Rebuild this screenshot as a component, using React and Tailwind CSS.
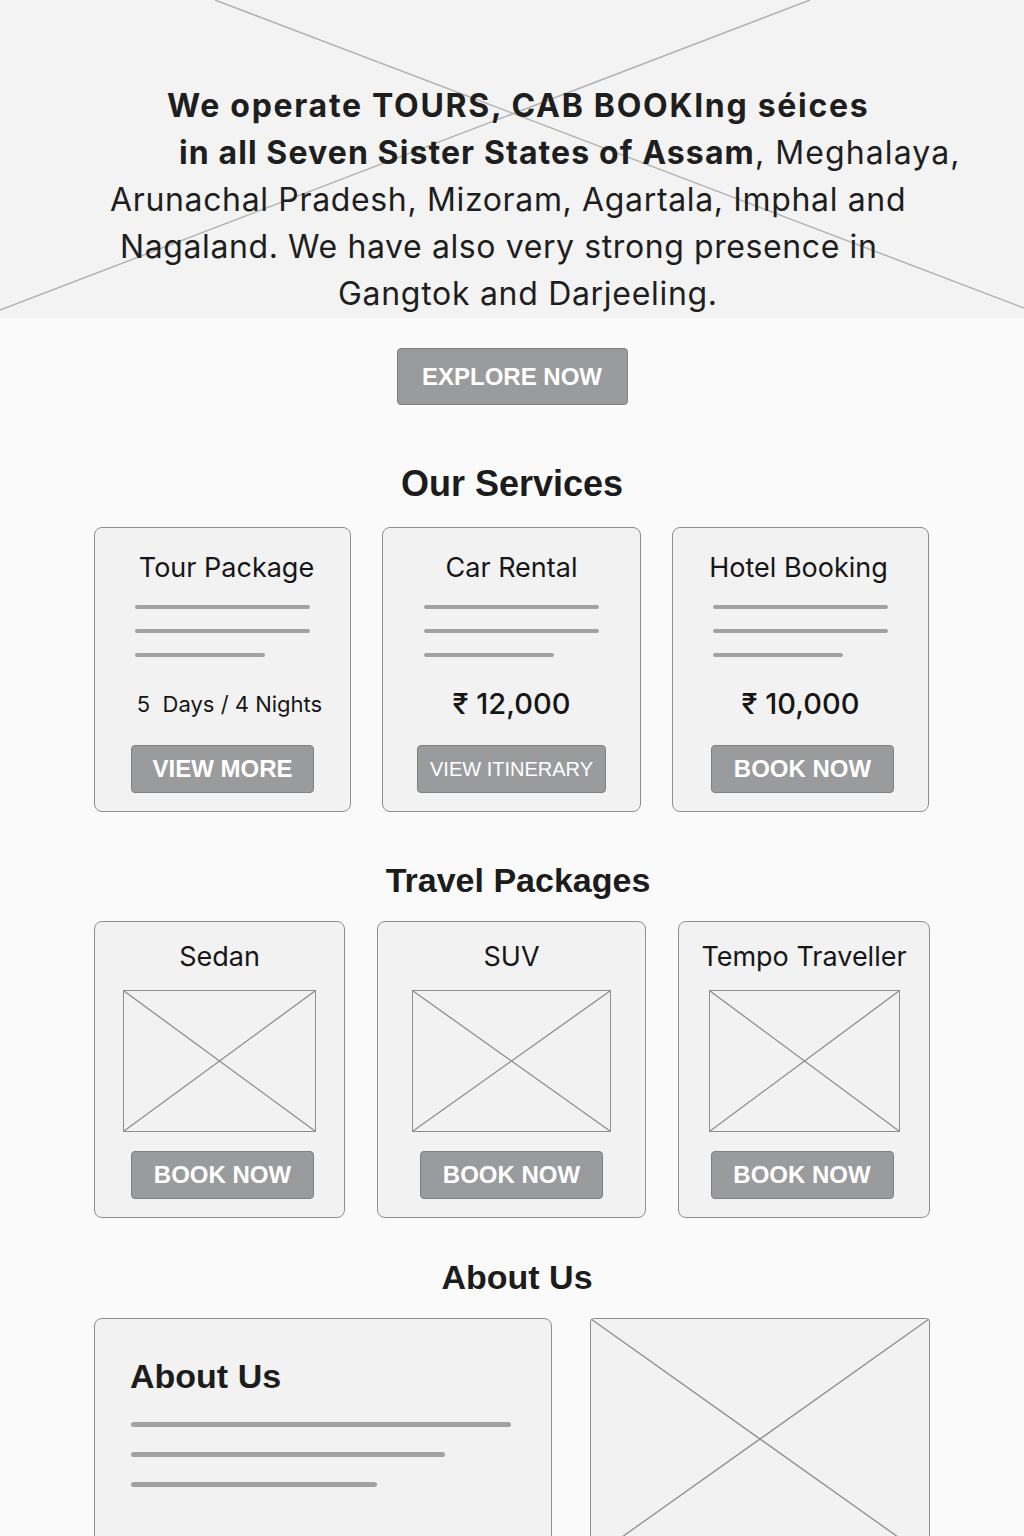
import React from "react";

const XBox = ({ className = "", stroke = "#8e8e8e" }) => (
  <div className={"relative border border-[#8e8e8e] bg-[#f2f2f2] " + className}>
    <svg className="absolute inset-0 w-full h-full" preserveAspectRatio="none" viewBox="0 0 100 100">
      <line x1="0" y1="0" x2="100" y2="100" stroke={stroke} strokeWidth="1.3" vectorEffect="non-scaling-stroke" />
      <line x1="100" y1="0" x2="0" y2="100" stroke={stroke} strokeWidth="1.3" vectorEffect="non-scaling-stroke" />
    </svg>
  </div>
);

const Btn = ({ children, className = "" }) => (
  <div
    className={
      "h-[48px] flex items-center justify-center rounded-[4px] bg-[#9a9b9d] border border-[#7f8082] text-white font-['Liberation_Sans',Arial,sans-serif] " +
      className
    }
  >
    {children}
  </div>
);

const Bars = () => (
  <div className="w-[175px] mx-auto flex flex-col gap-[20px] mt-[21px]">
    <div className="h-[4px] w-[175px] rounded-full bg-[#a2a2a4]" />
    <div className="h-[4px] w-[175px] rounded-full bg-[#a2a2a4]" />
    <div className="h-[4px] w-[130px] rounded-full bg-[#a2a2a4]" />
  </div>
);

const ServiceCard = ({ title, titleClass = "", value, valueClass, btn }) => (
  <div className="border border-[#8e8e8e] rounded-[8px] bg-[#f2f2f2] pt-[24px] pb-[18px] flex flex-col">
    <div className={"text-center text-[27px] leading-[32px] text-[#161616] font-['Inter',sans-serif] " + titleClass}>{title}</div>
    <Bars />
    <div className={"mt-[29px] h-[36px] flex items-center justify-center text-[#161616] font-['Inter',sans-serif] " + valueClass}>
      {value}
    </div>
    <div className="mt-[23px] flex justify-center">{btn}</div>
  </div>
);

const TravelCard = ({ title, imgW, btnClass }) => (
  <div className="border border-[#8e8e8e] rounded-[8px] bg-[#f2f2f2] pt-[19px] pb-[18px] flex flex-col items-center">
    <div className="text-center text-[27px] leading-[32px] text-[#161616] font-['Inter',sans-serif] whitespace-nowrap">{title}</div>
    <XBox className={"mt-[17px] h-[142px] " + imgW} />
    <Btn className={"mt-[19px] w-[183px] font-bold text-[24px] " + btnClass}>BOOK NOW</Btn>
  </div>
);

export default function App() {
  return (
    <div className="min-h-[1536px] bg-[#fafafa] text-[#1c1c1c]">
      {/* Hero */}
      <section className="relative h-[318px] bg-[#f3f3f3] overflow-hidden">
        <svg className="absolute inset-0 w-full h-full" preserveAspectRatio="none" viewBox="0 0 1024 318">
          <line x1="215" y1="0" x2="1024" y2="308" stroke="#b3b3b3" strokeWidth="1.5" />
          <line x1="810" y1="0" x2="0" y2="310" stroke="#b3b3b3" strokeWidth="1.5" />
        </svg>
        <div className="relative pt-[82px] flex flex-col text-[32px] leading-[47px] text-[#1e1e1e] font-['Inter',sans-serif] whitespace-nowrap">
          <div className="pl-[167px] font-bold tracking-[1.7px]">We operate TOURS, CAB BOOKIng séices</div>
          <div className="pl-[179px] tracking-[1.1px]">
            <span className="font-bold">in all Seven Sister States of Assam</span>, Meghalaya,
          </div>
          <div className="pl-[110px] tracking-[0.65px]">Arunachal Pradesh, Mizoram, Agartala, Imphal and</div>
          <div className="pl-[120px] tracking-[0.6px]">Nagaland. We have also very strong presence in</div>
          <div className="pl-[338px] tracking-[0.7px]">Gangtok and Darjeeling.</div>
        </div>
      </section>

      {/* Explore */}
      <div className="flex justify-center mt-[30px]">
        <div className="w-[231px] h-[57px] flex items-center justify-center rounded-[4px] bg-[#9a9b9d] border border-[#7f8082] text-white font-bold text-[24px] font-['Liberation_Sans',Arial,sans-serif]">
          EXPLORE NOW
        </div>
      </div>

      <div className="w-[836px] mx-auto">
        {/* Our Services */}
        <h2 className="mt-[57px] h-[44px] leading-[44px] text-center text-[36px] font-bold font-['Liberation_Sans',Arial,sans-serif] text-[#1c1c1c]">
          Our Services
        </h2>
        <div className="mt-[21px] grid grid-cols-[257px_259px_257px] gap-x-[31px]">
          <ServiceCard
            title="Tour Package"
            titleClass="pl-[8px]"
            value="5  Days / 4 Nights"
            valueClass="text-[22px] whitespace-pre pl-[14px]"
            btn={<Btn className="w-[183px] font-bold text-[24px]">VIEW MORE</Btn>}
          />
          <ServiceCard
            title="Car Rental"
            value="₹ 12,000"
            valueClass="text-[29px] font-medium"
            btn={<Btn className="w-[189px] text-[20px]">VIEW ITINERARY</Btn>}
          />
          <ServiceCard
            title="Hotel Booking"
            titleClass="pr-[4px]"
            value="₹ 10,000"
            valueClass="text-[29px] font-medium"
            btn={<Btn className="w-[183px] font-bold text-[24px] ml-[4px]">BOOK NOW</Btn>}
          />
        </div>

        {/* Travel Packages */}
        <h2 className="mt-[47px] h-[42px] leading-[42px] text-center text-[34px] font-bold font-['Liberation_Sans',Arial,sans-serif] text-[#1c1c1c] pl-[12px]">
          Travel Packages
        </h2>
        <div className="mt-[20px] grid grid-cols-[251px_269px_252px] gap-x-[32px]">
          <TravelCard title="Sedan" imgW="w-[193px]" btnClass="ml-[6px]" />
          <TravelCard title="SUV" imgW="w-[199px]" btnClass="" />
          <TravelCard title="Tempo Traveller" imgW="w-[191px]" btnClass="mr-[4px]" />
        </div>

        {/* About Us */}
        <h2 className="mt-[38px] h-[42px] leading-[42px] text-center text-[34px] font-bold font-['Liberation_Sans',Arial,sans-serif] text-[#1c1c1c] pl-[10px]">
          About Us
        </h2>
        <div className="mt-[20px] grid grid-cols-[458px_340px] gap-x-[38px]">
          <div className="h-[242px] border border-[#8e8e8e] rounded-[8px] bg-[#f2f2f2] pt-[37px] pl-[35px]">
            <div className="h-[40px] leading-[40px] text-[34px] font-bold font-['Liberation_Sans',Arial,sans-serif] text-[#1c1c1c]">
              About Us
            </div>
            <div className="mt-[26px] flex flex-col gap-[25px] pl-[1px]">
              <div className="h-[5px] w-[380px] rounded-full bg-[#a2a2a4]" />
              <div className="h-[5px] w-[314px] rounded-full bg-[#a2a2a4]" />
              <div className="h-[5px] w-[246px] rounded-full bg-[#a2a2a4]" />
            </div>
          </div>
          <XBox className="h-[242px] rounded-[4px]" />
        </div>
      </div>
      <div className="h-[40px]" />
    </div>
  );
}
